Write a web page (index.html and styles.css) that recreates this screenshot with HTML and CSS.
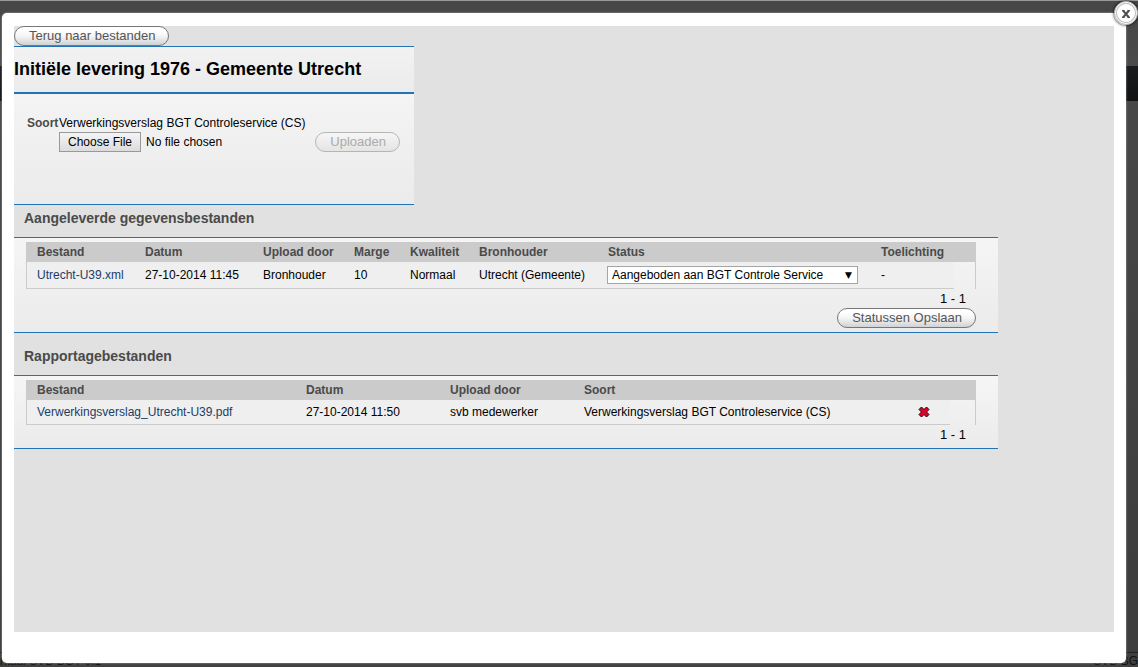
FILE: index.html
```html
<!DOCTYPE html>
<html lang="nl">
<head>
<meta charset="utf-8">
<title>Initiële levering 1976 - Gemeente Utrecht</title>
<link rel="stylesheet" href="styles.css">
</head>
<body>
<div class="backdrop" aria-hidden="true">
  <div class="site-head"></div>
  <div class="site-nav"></div>
  <div class="site-main"></div>
  <div class="site-foot"><span>ntaal SVB BGT 0.1</span><span>SVB BG</span></div>
</div>
<div class="dialog" role="dialog" aria-labelledby="title">
  <button class="close" type="button" aria-label="Sluiten">
    <svg viewBox="0 0 24 24" width="24" height="24">
      <circle cx="12" cy="12" r="11.5" fill="#fff" stroke="#b0b0b0"/>
      <circle cx="12" cy="12" r="9.6" fill="#fff" stroke="#c4c4c4" stroke-width="1.2"/>
      <path d="M9 9.500l6 7M15 9.500l-6 7" stroke="#505050" stroke-width="2"/>
      <path d="M8 9.500h2.500M13.500 9.500h2.500M8 16.500h2.500M13.500 16.500h2.500" stroke="#505050" stroke-width="1"/>
    </svg>
  </button>
  <main class="content">
    <button class="pill" type="button">Terug naar bestanden</button>
    <section class="delivery">
      <h1 id="title">Initiële levering 1976 - Gemeente Utrecht</h1>
      <form class="upload">
        <label class="upload-label" for="file">Soort</label>
        <span class="kind">Verwerkingsverslag BGT Controleservice (CS)</span>
        <input class="file" id="file" type="file">
        <button class="pill" type="button" disabled>Uploaden</button>
      </form>
    </section>

    <h2 class="first">Aangeleverde gegevensbestanden</h2>
    <section class="panel">
      <table>
        <colgroup><col class="c108"><col class="c118"><col class="c91"><col class="c56"><col class="c69"><col class="c129"><col class="c273"><col class="rest"><col class="c22"></colgroup>
        <thead>
          <tr><th>Bestand</th><th>Datum</th><th>Upload door</th><th>Marge</th><th>Kwaliteit</th><th>Bronhouder</th><th>Status</th><th>Toelichting</th><th></th></tr>
        </thead>
        <tbody>
          <tr class="tall">
            <td><a href="#">Utrecht-U39.xml</a></td><td>27-10-2014 11:45</td><td>Bronhouder</td><td>10</td><td>Normaal</td><td>Utrecht (Gemeente)</td>
            <td class="status"><span class="select"><select aria-label="Status"><option>Aangeboden aan BGT Controle Service</option></select></span></td>
            <td>-</td><td></td>
          </tr>
        </tbody>
      </table>
      <p class="pager">1 - 1</p>
      <div class="actions"><button class="pill" type="button">Statussen Opslaan</button></div>
    </section>

    <h2>Rapportagebestanden</h2>
    <section class="panel">
      <table>
        <colgroup><col class="c269"><col class="c144"><col class="c134"><col class="c334"><col class="rest"><col class="c26"></colgroup>
        <thead>
          <tr><th>Bestand</th><th>Datum</th><th>Upload door</th><th>Soort</th><th></th><th></th></tr>
        </thead>
        <tbody>
          <tr>
            <td><a href="#">Verwerkingsverslag_Utrecht-U39.pdf</a></td><td>27-10-2014 11:50</td><td>svb medewerker</td><td>Verwerkingsverslag BGT Controleservice (CS)</td>
            <td><button class="delete" type="button" aria-label="Verwijderen"><svg viewBox="0 0 12 12" width="12" height="12"><path d="M3.500 1L6 3.500 8.500 1 11 3.500 8.500 6 11 8.500 8.500 11 6 8.500 3.500 11 1 8.500 3.500 6 1 3.500z" fill="#e3002b" stroke="#200" stroke-width="1"/></svg></button></td>
            <td></td>
          </tr>
        </tbody>
      </table>
      <p class="pager">1 - 1</p>
    </section>
  </main>
</div>
</body>
</html>
```
FILE: styles.css
```css
* { box-sizing: border-box; }

body {
  margin: 0;
  font: 12px/16px "Liberation Sans", Arial, sans-serif;
  color: #000;
}

.backdrop {
  height: 100vh;
  display: flex;
  flex-direction: column;
  overflow: hidden;
  background: #404040;
}
.site-head {
  height: 66px;
  border-top: 1px solid #999;
  background: linear-gradient(#484848, #474747 20%, #4b4b4b);
}
.site-nav { height: 35px; background: linear-gradient(#1b1c1d, #111213); }
.site-main { flex: 1; background: linear-gradient(#474747, #3d3d3d); }
.site-foot {
  display: flex;
  justify-content: space-between;
  height: 15px;
  border-top: 1px solid #222;
  color: #111;
  line-height: 16px;
}

.dialog {
  position: absolute;
  inset: 13px 12px 4px 2px;
  display: flex;
  padding: 13px 12px 31px;
  background: #fff;
  border-radius: 5px;
  box-shadow: 0 0 2px #bbb;
}
.close {
  position: absolute;
  top: -12px;
  right: -12px;
  width: 24px;
  height: 24px;
  padding: 0;
  border: 0;
  border-radius: 50%;
  background: none;
  box-shadow: 0 0 3px #000;
}
.close svg, .delete svg { display: block; }

.content {
  flex: 1;
  overflow: auto;
  background: #e1e1e1;
}

.pill {
  display: block;
  height: 20px;
  padding: 0 13px 0 14px;
  border: 1px solid #777;
  border-radius: 10px;
  background: linear-gradient(#fff 20%, #f5f5f5 50%, #d0d2d4);
  font: 13px/16px "Liberation Sans", Arial, sans-serif;
  color: #555;
  white-space: nowrap;
}
.pill:disabled {
  border-color: #b5b5b5;
  background: linear-gradient(#f6f6f6, #e4e4e4);
  color: #aaa;
}

.delivery {
  max-width: 400px;
  border-top: 1px solid #2374b5;
  border-bottom: 1px solid #2374b5;
  background: #f0f0f0;
}
h1 {
  margin: 0;
  padding: 12px 0 13px;
  border-bottom: 2px solid #2374b5;
  background: linear-gradient(#f2f2f2, #ebebeb);
  font-size: 18px;
  line-height: 20px;
}
.upload {
  display: grid;
  grid-template-columns: 32px 1fr auto;
  grid-template-rows: 17px 20px;
  padding: 21px 14px 52px 13px;
  background: linear-gradient(#f4f4f4, #ebebeb);
}
.upload-label { font-weight: bold; color: #4a4a4a; }
.kind { grid-column: 2 / 4; }
.file {
  grid-column: 2;
  min-width: 0;
  height: 20px;
  font: inherit;
  line-height: 18px;
}
.file::file-selector-button {
  height: 20px;
  margin: 0 5px 0 0;
  padding: 0 8px;
  border: 1px solid #999;
  border-radius: 0;
  background: linear-gradient(#f4f4f4, #dcdcdc);
  font: inherit;
  line-height: 16px;
  color: #000;
}

h2 {
  margin: 0;
  padding: 14px 10px 10px;
  font-size: 14px;
  line-height: 18px;
  color: #4a4a4a;
}
h2.first { padding-top: 4px; }

.panel {
  max-width: 984px;
  padding: 4px 22px 4px 12px;
  border-top: 1px solid #2374b5;
  border-bottom: 1px solid #2374b5;
  background: linear-gradient(#f5f5f5, #ebebeb);
}

table {
  width: 100%;
  table-layout: fixed;
  border-spacing: 0;
}
th, td {
  padding: 0 0 0 11px;
  text-align: left;
  white-space: nowrap;
}
th { height: 20px; background: #cbcbcb; color: #4a4a4a; }
td { height: 25px; border-bottom: 1px solid #cbcbcb; background: #efefef; }
.tall td { height: 27px; }
td:first-child { padding-left: 10px; border-left: 1px solid #cbcbcb; }
td:last-child { border-bottom: 0; border-right: 1px solid #cbcbcb; background: none; }
td a { color: #1c3d66; text-decoration: none; }

.c22 { width: 22px; }
.c26 { width: 26px; }
.c56 { width: 56px; }
.c69 { width: 69px; }
.c91 { width: 91px; }
.c108 { width: 108px; }
.c118 { width: 118px; }
.c129 { width: 129px; }
.c134 { width: 134px; }
.c144 { width: 144px; }
.c269 { width: 269px; }
.c273 { width: 273px; }
.c334 { width: 334px; }

td.status { padding-left: 10px; }
.select { position: relative; display: block; width: 251px; }
.select::after {
  content: "▼";
  position: absolute;
  top: 0;
  right: 6px;
  font: 9px/18px "DejaVu Sans", sans-serif;
  pointer-events: none;
}
select {
  display: block;
  width: 100%;
  height: 18px;
  padding: 0 4px;
  border: 1px solid #a5a5a5;
  border-radius: 0;
  appearance: none;
  background: #fff;
  font: inherit;
  color: #000;
}
.delete { display: block; padding: 0; border: 0; background: none; }

.pager {
  margin: 0;
  padding-right: 10px;
  font-size: 13px;
  line-height: 19px;
  text-align: right;
}
.actions { display: flex; justify-content: flex-end; }
```
